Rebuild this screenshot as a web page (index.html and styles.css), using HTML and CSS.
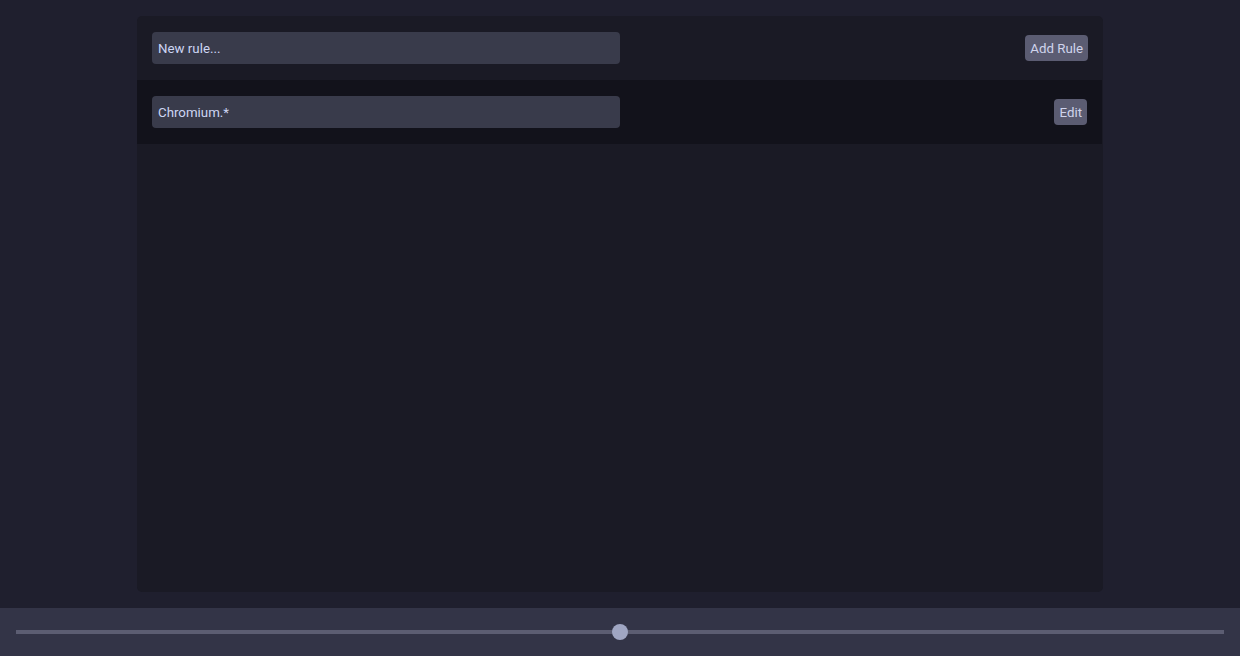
FILE: index.html
```html
<!DOCTYPE html>
<html>
<head>
<meta charset="utf-8">
<link rel="stylesheet" href="styles.css">
</head>
<body>
<div class="app">
  <main class="main">
    <section class="panel">
      <div class="row">
        <input class="field" type="text" placeholder="New rule...">
        <button class="btn">Add Rule</button>
      </div>
      <div class="row row-item">
        <input class="field" type="text" value="Chromium.*">
        <button class="btn">Edit</button>
      </div>
    </section>
  </main>
  <footer class="bar">
    <div class="slider">
      <div class="track"></div>
      <div class="thumb"></div>
    </div>
  </footer>
</div>
</body>
</html>
```
FILE: styles.css
```css
html, body {
  margin: 0;
  padding: 0;
  background: #1f1f2e;
  font-family: Roboto, "Liberation Sans", sans-serif;
  color: #cdd6f4;
}
.app {
  width: 1240px;
  height: 656px;
  display: flex;
  flex-direction: column;
}
.main {
  flex: 1;
  display: flex;
  justify-content: center;
  padding: 16px 0;
}
.panel {
  width: 966px;
  background: #1a1a25;
  border-radius: 5px;
  overflow: hidden;
}
.row {
  height: 64px;
  box-sizing: border-box;
  padding: 0 15px;
  display: flex;
  align-items: center;
  justify-content: space-between;
}
.row-item {
  background: #12121b;
  margin-left: -1px;
  margin-right: 1px;
  padding-left: 16px;
}
.field {
  width: 468px;
  height: 32px;
  box-sizing: border-box;
  border: none;
  outline: none;
  border-radius: 4px;
  background: #393b4b;
  color: #cdd6f4;
  font-family: Roboto, "Liberation Sans", sans-serif;
  font-size: 13.3px;
  padding: 0 6px;
}
.field::placeholder {
  color: #cdd6f4;
  opacity: 1;
}
.btn {
  height: 26px;
  border: none;
  border-radius: 4px;
  background: #5b5c72;
  color: #d0d4ec;
  font-family: Roboto, "Liberation Sans", sans-serif;
  font-size: 13.3px;
  padding: 0 5px;
}
.bar {
  height: 48px;
  background: #333447;
  display: flex;
  align-items: center;
  padding: 0 16px;
}
.slider {
  position: relative;
  flex: 1;
  height: 16px;
  display: flex;
  align-items: center;
}
.track {
  flex: 1;
  height: 4px;
  background: #5c5d72;
}
.thumb {
  position: absolute;
  left: 596px;
  top: 0;
  width: 16px;
  height: 16px;
  border-radius: 50%;
  background: #a0a6c3;
}
```
